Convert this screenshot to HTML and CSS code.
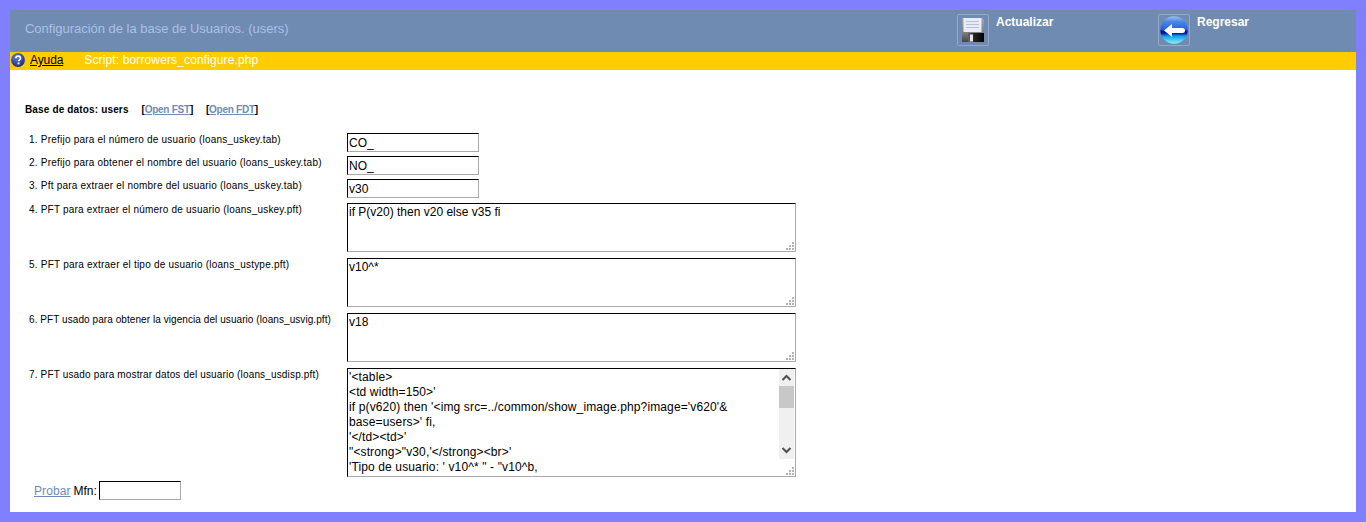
FILE: index.html
```html
<!DOCTYPE html>
<html lang="es">
<head>
<meta charset="utf-8">
<title>Configuración de la base de Usuarios</title>
<link rel="stylesheet" href="styles.css">
</head>
<body>
<div class="page">
  <header class="heading">
    <div class="title">Configuración de la base de Usuarios. (users)</div>
    <div class="actions">
      <a class="action" href="#">
        <span class="icon-box">
          <svg width="22" height="24" viewBox="0 0 22 24">
            <defs>
              <linearGradient id="fl" x1="0" y1="0" x2="0" y2="1"><stop offset="0" stop-color="#a8a8a8"/><stop offset=".6" stop-color="#808080"/><stop offset="1" stop-color="#444"/></linearGradient>
              <linearGradient id="sl" x1="0" y1="0" x2="1" y2="0"><stop offset="0" stop-color="#666"/><stop offset=".4" stop-color="#222"/><stop offset="1" stop-color="#000"/></linearGradient>
            </defs>
            <path d="M0 0h20l2 2v22H0z" fill="url(#fl)"/>
            <rect x="1.500" y="0" width="18" height="14" fill="#e8edf5"/>
            <path d="M4 3.500h13M4 6.500h13M4 9.500h13" stroke="#b4c1d6" stroke-width="1"/>
            <rect x="6" y="15" width="16" height="9" fill="url(#sl)"/>
            <rect x="8" y="16.500" width="3" height="7" fill="#e4e4e4"/>
          </svg>
        </span>
        <span class="action-label">Actualizar</span>
      </a>
      <a class="action" href="#">
        <span class="icon-box">
          <svg width="28" height="28" viewBox="0 0 28 28">
            <defs>
              <linearGradient id="bt" x1="0" y1="0" x2="0" y2="1"><stop offset="0" stop-color="#9cc0f0"/><stop offset=".2" stop-color="#4a86e4"/><stop offset=".5" stop-color="#2060d8"/><stop offset=".53" stop-color="#00109c"/><stop offset=".62" stop-color="#0018a8"/><stop offset=".72" stop-color="#10a0e8"/><stop offset="1" stop-color="#8ef0f4"/></linearGradient>
            </defs>
            <circle cx="14" cy="14" r="13.700" fill="url(#bt)"/>
            <path d="M4 14.500l8-6.500v4h10.500a2.300 2.300 0 0 1 0 5H12v4z" fill="#fbfbff"/>
          </svg>
        </span>
        <span class="action-label">Regresar</span>
      </a>
    </div>
  </header>
  <div class="helper">
    <svg class="help-icon" width="14" height="14" viewBox="0 0 15 15">
      <defs><radialGradient id="hb" cx=".4" cy=".3" r=".8"><stop offset="0" stop-color="#5f7fd8"/><stop offset="1" stop-color="#12246e"/></radialGradient></defs>
      <circle cx="7.500" cy="7.500" r="7.400" fill="url(#hb)"/>
      <path d="M5.200 5.600c0-3 5-3 5 0 0 1.700-2.100 1.700-2.100 3.300" fill="none" stroke="#fff" stroke-width="1.700"/>
      <rect x="7.100" y="10.200" width="2" height="2" fill="#fff"/>
    </svg>
    <a class="help-link" href="#">Ayuda</a>
    <span class="script-name">Script: borrowers_configure.php</span>
  </div>
  <main class="middle">
    <div class="db-line">
      <strong>Base de datos: users</strong>
      <span class="open-link">[<a href="#">Open FST</a>]</span>
      <span class="open-link">[<a href="#">Open FDT</a>]</span>
    </div>
    <form class="form">
      <label class="row row-input"><span class="lbl">1. Prefijo para el número de usuario (loans_uskey.tab)</span><input class="field-input" type="text" value="CO_"></label>
      <label class="row row-input"><span class="lbl lbl-two">2. Prefijo para obtener el nombre del usuario (loans_uskey.tab)</span><input class="field-input" type="text" value="NO_"></label>
      <label class="row row-input row-last"><span class="lbl">3. Pft para extraer el nombre del usuario (loans_uskey.tab)</span><input class="field-input" type="text" value="v30"></label>
      <div class="row row-area"><span class="lbl lbl-four">4. PFT para extraer el número de usuario (loans_uskey.pft)</span>
        <div class="area-wrap"><textarea class="field-area">if P(v20) then v20 else v35 fi</textarea>
          <svg class="grip" width="9" height="9" viewBox="0 0 9 9"><path d="M7 1h2v2H7zM4 4h2v2H4zM7 4h2v2H7zM1 7h2v2H1zM4 7h2v2H4zM7 7h2v2H7z" fill="#b4b4b4"/></svg></div></div>
      <div class="row row-area"><span class="lbl">5. PFT para extraer el tipo de usuario (loans_ustype.pft)</span>
        <div class="area-wrap"><textarea class="field-area">v10^*</textarea>
          <svg class="grip" width="9" height="9" viewBox="0 0 9 9"><path d="M7 1h2v2H7zM4 4h2v2H4zM7 4h2v2H7zM1 7h2v2H1zM4 7h2v2H4zM7 7h2v2H7z" fill="#b4b4b4"/></svg></div></div>
      <div class="row row-area"><span class="lbl lbl-six">6. PFT usado para obtener la vigencia del usuario (loans_usvig.pft)</span>
        <div class="area-wrap"><textarea class="field-area">v18</textarea>
          <svg class="grip" width="9" height="9" viewBox="0 0 9 9"><path d="M7 1h2v2H7zM4 4h2v2H4zM7 4h2v2H7zM1 7h2v2H1zM4 7h2v2H4zM7 7h2v2H7z" fill="#b4b4b4"/></svg></div></div>
      <div class="row row-area"><span class="lbl lbl-seven">7. PFT usado para mostrar datos del usuario (loans_usdisp.pft)</span>
        <div class="area-wrap"><textarea class="field-area field-tall">'&lt;table&gt;
&lt;td width=150&gt;'
if p(v620) then '&lt;img src=../common/show_image.php?image='v620'&amp;
base=users&gt;' fi,
'&lt;/td&gt;&lt;td&gt;'
"&lt;strong&gt;"v30,'&lt;/strong&gt;&lt;br&gt;'
'Tipo de usuario: ' v10^* " - "v10^b,
'&lt;br&gt;Vigencia: ' v18,
'&lt;br&gt;Domicilio: ' v40,
'&lt;br&gt;Ciudad: ' v50,
'&lt;br&gt;Teléfono: ' v60,
'&lt;br&gt;Correo: ' v70,
'&lt;/td&gt;&lt;/table&gt;'</textarea>
          <div class="scrollbar">
            <svg class="scroll-arrow" width="15" height="17" viewBox="0 0 15 17"><path d="M3.500 11l4-4 4 4" fill="none" stroke="#505050" stroke-width="2"/></svg>
            <div class="scroll-thumb"></div>
            <div class="scroll-space"></div>
            <svg class="scroll-arrow" width="15" height="17" viewBox="0 0 15 17"><path d="M3.500 6l4 4 4-4" fill="none" stroke="#505050" stroke-width="2"/></svg>
          </div>
          <svg class="grip" width="9" height="9" viewBox="0 0 9 9"><path d="M7 1h2v2H7zM4 4h2v2H4zM7 4h2v2H7zM1 7h2v2H1zM4 7h2v2H4zM7 7h2v2H7z" fill="#b4b4b4"/></svg></div></div>
      <div class="probe"><a href="#">Probar</a> <span>Mfn:</span> <input class="mfn" type="text"></div>
    </form>
  </main>
</div>
</body>
</html>
```
FILE: styles.css
```css
html, body { margin: 0; padding: 0; height: 100%; }
body {
  background: #8080ff;
  font-family: "Liberation Sans", Arial, sans-serif;
  overflow: hidden;
}
.page {
  margin: 10px;
  height: 502px;
  background: #fff;
  overflow: hidden;
}
.heading {
  height: 42px;
  background: #708bb2;
  display: flex;
  justify-content: space-between;
}
.title {
  padding: 11px 0 0 15px;
  font-size: 13px;
  line-height: 15px;
  letter-spacing: -.02px;
  color: #a9c1e6;
}
.actions {
  display: flex;
  width: 399px;
}
.action {
  display: flex;
  width: 201px;
  flex: none;
  padding-top: 4px;
  color: #fff;
  text-decoration: none;
  font-size: 12px;
  font-weight: bold;
  line-height: 14px;
}
.icon-box {
  box-sizing: border-box;
  width: 32px;
  height: 32px;
  border: 1px solid #95a8c6;
  border-radius: 2px;
  display: flex;
  align-items: center;
  justify-content: center;
  flex: none;
}
.action-label { margin: 1px 0 0 7px; }
.helper {
  height: 18px;
  background: #ffcc00;
  display: flex;
  align-items: center;
  font-size: 12px;
  line-height: 14px;
}
.help-icon { flex: none; margin: 0 0 2px 1px; }
.help-link { margin: 0 0 2px 5px; color: #000; text-decoration: underline; letter-spacing: -.1px; }
.script-name { margin: 0 0 2px 21px; color: #fff; letter-spacing: .13px; }
.middle { padding: 34px 0 0 15px; }
.db-line {
  font-size: 10px;
  line-height: 12px;
  height: 12px;
  letter-spacing: .15px;
  color: #000;
}
.db-line strong { margin-right: 10px; }
.open-link { margin-right: 10px; font-weight: bold; letter-spacing: -.25px; }
.open-link a { color: #6f8bb3; text-decoration: underline; }
.form { margin-top: 17px; }
.row {
  display: flex;
  align-items: flex-start;
}
.row-input { height: 23px; }
.row-last { height: 24px; }
.row-area { margin-bottom: 6px; }
.lbl {
  box-sizing: border-box;
  width: 322px;
  flex: none;
  padding: 1px 0 0 4px;
  font-size: 10px;
  line-height: 12px;
  letter-spacing: .22px;
  color: #000;
  white-space: nowrap;
}
.lbl-two { letter-spacing: .22px; }
.lbl-four { letter-spacing: .2px; }
.lbl-six { letter-spacing: .07px; }
.lbl-seven { letter-spacing: .16px; }
.field-input, .field-area, .mfn {
  box-sizing: border-box;
  margin: 0;
  border-style: solid;
  border-width: 1px;
  border-color: #000 #aaa #aaa #000;
  border-radius: 0;
  outline: none;
  background: #fff;
  color: #000;
  font-family: "Liberation Sans", Arial, sans-serif;
  font-size: 12px;
}
.field-input {
  width: 132px;
  height: 19px;
  padding: 2px 1px 1px;
}
.area-wrap {
  position: relative;
  width: 449px;
}
.field-area {
  display: block;
  width: 449px;
  height: 49px;
  padding: 1px;
  line-height: 15px;
  overflow: hidden;
  resize: none;
}
.field-tall { height: 109px; padding-right: 17px; letter-spacing: .13px; }
.grip {
  position: absolute;
  right: 2px;
  bottom: 2px;
}
.scrollbar {
  position: absolute;
  top: 1px;
  right: 2px;
  width: 15px;
  height: 90px;
  background: #f0f0f0;
  display: flex;
  flex-direction: column;
}
.scroll-arrow { flex: none; display: block; }
.scroll-thumb { height: 22px; background: #c8c8c8; flex: none; }
.scroll-space { flex: 1; }
.probe {
  margin: -2px 0 0 9px;
  font-size: 12px;
  line-height: 18px;
  display: flex;
  align-items: center;
  gap: 3px;
  color: #000;
}
.probe a { color: #6f8bb3; text-decoration: underline; letter-spacing: .08px; }
.mfn { width: 82px; height: 19px; padding: 1px; margin-left: -1px; }
```
